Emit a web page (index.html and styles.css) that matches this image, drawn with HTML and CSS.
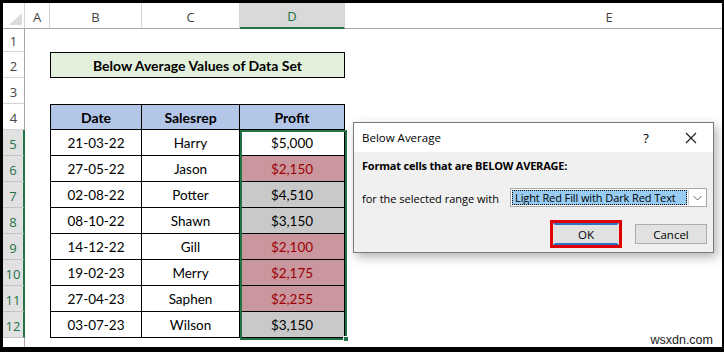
FILE: index.html
```html
<!DOCTYPE html>
<html>
<head>
<meta charset="utf-8">
<link rel="stylesheet" href="styles.css">
</head>
<body>
<div class="frame">
  <div class="sheet">
    <div class="corner"><span class="tri"></span></div>
    <div class="colhdr">A</div>
    <div class="colhdr">B</div>
    <div class="colhdr">C</div>
    <div class="colhdr on">D</div>
    <div class="colhdr wide">E</div>

    <div class="rowhdr">1</div>
    <div class="rowhdr">2</div>
    <div class="title">Below Average Values of Data Set</div>
    <div class="rowhdr">3</div>
    <div class="rowhdr">4</div>
    <div class="t cb top head">Date</div>
    <div class="t cc top head">Salesrep</div>
    <div class="t cd top head">Profit</div>

    <div class="rowhdr on">5</div>
    <div class="t cb">21-03-22</div>
    <div class="t cc">Harry</div>
    <div class="t cd">$5,000</div>

    <div class="rowhdr on">6</div>
    <div class="t cb">27-05-22</div>
    <div class="t cc">Jason</div>
    <div class="t cd red">$2,150</div>

    <div class="rowhdr on">7</div>
    <div class="t cb">02-08-22</div>
    <div class="t cc">Potter</div>
    <div class="t cd grey">$4,510</div>

    <div class="rowhdr on">8</div>
    <div class="t cb">08-10-22</div>
    <div class="t cc">Shawn</div>
    <div class="t cd grey">$3,150</div>

    <div class="rowhdr on">9</div>
    <div class="t cb">14-12-22</div>
    <div class="t cc">Gill</div>
    <div class="t cd red">$2,100</div>

    <div class="rowhdr on">10</div>
    <div class="t cb">19-02-23</div>
    <div class="t cc">Merry</div>
    <div class="t cd red">$2,175</div>

    <div class="rowhdr on">11</div>
    <div class="t cb">27-04-23</div>
    <div class="t cc">Saphen</div>
    <div class="t cd red">$2,255</div>

    <div class="rowhdr on">12</div>
    <div class="t cb">03-07-23</div>
    <div class="t cc">Wilson</div>
    <div class="t cd grey">$3,150</div>

    <div class="rowhdr filler"></div>

    <div class="selection"><span class="handle"></span></div>
  </div>

  <div class="dlg">
    <div class="dlg-title">
      <span class="dlg-name">Below Average</span>
      <span class="dlg-help">?</span>
      <span class="dlg-close">
        <svg width="12" height="12" viewBox="0 0 12 12"><path d="M1 1 L11 11 M11 1 L1 11" stroke="#1a1a1a" stroke-width="1.1" fill="none"/></svg>
      </span>
    </div>
    <div class="dlg-body">
      <div class="dlg-head">Format cells that are BELOW AVERAGE:</div>
      <div class="dlg-row">
        <span class="dlg-label">for the selected range with</span>
        <div class="combo">
          <span class="combo-val">Light Red Fill with Dark Red Text</span>
          <span class="combo-btn">
            <svg width="9" height="6" viewBox="0 0 9 6"><path d="M0.5 1 L4.5 5 L8.5 1" stroke="#6a6a6a" stroke-width="1" fill="none"/></svg>
          </span>
        </div>
      </div>
      <div class="dlg-btns">
        <div class="okmark"><div class="btn ok">OK</div></div>
        <div class="btn">Cancel</div>
      </div>
    </div>
  </div>

  <div class="mark">wsxdn.com</div>
</div>
</body>
</html>
```

FILE: styles.css
```css
* { box-sizing: border-box; }

body {
  margin: 0;
  width: 724px;
  height: 352px;
  background: #000;
  overflow: hidden;
}

.frame {
  position: relative;
  margin: 3px 2px 0 3px;
  width: 719px;
  height: 344px;
  background: #fff;
  overflow: hidden;
}

.sheet {
  position: relative;
  display: grid;
  grid-template-columns: 22px 25px 92px 98px 105px 528px;
  grid-template-rows: 26px 23px 26px 26px 26px repeat(8, 26px) 20px;
  font-family: Lato, "Open Sans", sans-serif;
  font-size: 13.5px;
  color: #000;
}

.corner {
  position: relative;
  border-right: 1px solid #d4d4d4;
  border-bottom: 1px solid #a6a6a6;
}
.tri {
  position: absolute;
  right: 2px;
  bottom: 3px;
  width: 0;
  height: 0;
  border-left: 13px solid transparent;
  border-bottom: 12px solid #dcdcdc;
}

.colhdr {
  display: flex;
  align-items: center;
  justify-content: center;
  border-right: 1px solid #d4d4d4;
  border-bottom: 1px solid #a6a6a6;
  color: #444;
  font-family: "Open Sans", sans-serif;
  font-size: 13px;
  padding-top: 2px;
}
.colhdr.on {
  background: #d9d9d9;
  border-bottom: 2px solid #217346;
  color: #217346;
}
.colhdr.wide { border-right: none; }

.rowhdr {
  grid-column: 1;
  display: flex;
  align-items: center;
  justify-content: center;
  border-right: 1px solid #a6a6a6;
  border-bottom: 1px solid #d4d4d4;
  color: #444;
  font-family: "Open Sans", sans-serif;
  font-size: 13px;
  padding-top: 2px;
}
.rowhdr.on {
  background: #e1e1e1;
  color: #217346;
  border-right: 2px solid #217346;
  border-bottom-color: #c4c4c4;
}
.rowhdr.filler { border-bottom: none; }

.title {
  grid-column: 3 / span 3;
  display: flex;
  align-items: center;
  justify-content: center;
  background: #e2efda;
  border: 1px solid #000;
  font-weight: 700;
  font-size: 14px;
}

.t {
  display: flex;
  align-items: center;
  justify-content: center;
  border-right: 1px solid #000;
  border-bottom: 1px solid #000;
  padding-top: 1px;
}
.t.cb { grid-column: 3; border-left: 1px solid #000; }
.t.cc { grid-column: 4; }
.t.cd { grid-column: 5; }
.t.top { border-top: 1px solid #000; }
.t.head {
  background: #b4c6e7;
  font-weight: 700;
  font-size: 14px;
}
.t.red { background: #c9979d; color: #9c0006; }
.t.grey { background: #c9c9c9; }

.selection {
  position: absolute;
  left: 237px;
  top: 127px;
  width: 107px;
  height: 210px;
  border: 2px solid #217346;
  pointer-events: none;
}
.handle {
  position: absolute;
  right: -4px;
  bottom: -4px;
  width: 6px;
  height: 6px;
  background: #217346;
  border: 1px solid #fff;
}

/* dialog */
.dlg {
  position: absolute;
  left: 350px;
  top: 119px;
  width: 361px;
  height: 131px;
  border: 1px solid #7a7a7a;
  background: #f0f0f0;
  box-shadow: 3px 4px 10px rgba(0, 0, 0, 0.3);
  font-family: "Open Sans", sans-serif;
  font-size: 11px;
  color: #000;
  display: flex;
  flex-direction: column;
  white-space: nowrap;
}
.dlg-title {
  height: 29px;
  background: #fff;
  display: flex;
  align-items: center;
  padding-left: 8px;
  font-size: 11.5px;
}
.dlg-name { flex: 1; }
.dlg-help {
  width: 14px;
  text-align: center;
  margin-right: 32px;
  font-size: 13px;
}
.dlg-close {
  width: 12px;
  margin-right: 16px;
  display: flex;
}
.dlg-body {
  flex: 1;
  display: flex;
  flex-direction: column;
  padding: 6px 6px 0 8px;
}
.dlg-head {
  font-weight: 700;
  line-height: 16px;
  letter-spacing: -0.2px;
}
.dlg-row {
  margin-top: 14px;
  height: 19px;
  display: flex;
  align-items: center;
  justify-content: space-between;
}
.dlg-label { padding-top: 1px; }
.combo {
  width: 197px;
  height: 19px;
  border: 1px solid #a9a9a9;
  background: #fff;
  display: flex;
  padding: 1px;
}
.combo-val {
  flex: 1;
  background: #99ccf3;
  border: 1px dotted #000;
  display: flex;
  align-items: center;
  padding-left: 2px;
  line-height: 1;
  overflow: hidden;
  font-size: 11px;
  letter-spacing: -0.1px;
}
.combo-btn {
  width: 17px;
  display: flex;
  align-items: center;
  justify-content: center;
  border-left: 1px solid #d0d0d0;
  margin-left: 1px;
}
.dlg-btns {
  margin-top: 13px;
  display: flex;
  justify-content: flex-end;
  align-items: center;
  gap: 13px;
}
.okmark {
  width: 72px;
  height: 28px;
  border: 3px solid #e00000;
}
.btn {
  width: 72px;
  height: 20px;
  background: #e1e1e1;
  border: 1px solid #adadad;
  display: flex;
  align-items: center;
  justify-content: center;
  font-size: 11.5px;
}
.btn.ok {
  width: 100%;
  height: 100%;
  border: 2px solid #2b73c4;
  border-left-color: #e1e1e1;
  border-right-color: #e1e1e1;
}

.mark {
  position: absolute;
  right: 9px;
  bottom: 0;
  font-family: "Liberation Sans", Arial, sans-serif;
  font-size: 12.5px;
  color: #1a1a1a;
  line-height: 13px;
}
```
